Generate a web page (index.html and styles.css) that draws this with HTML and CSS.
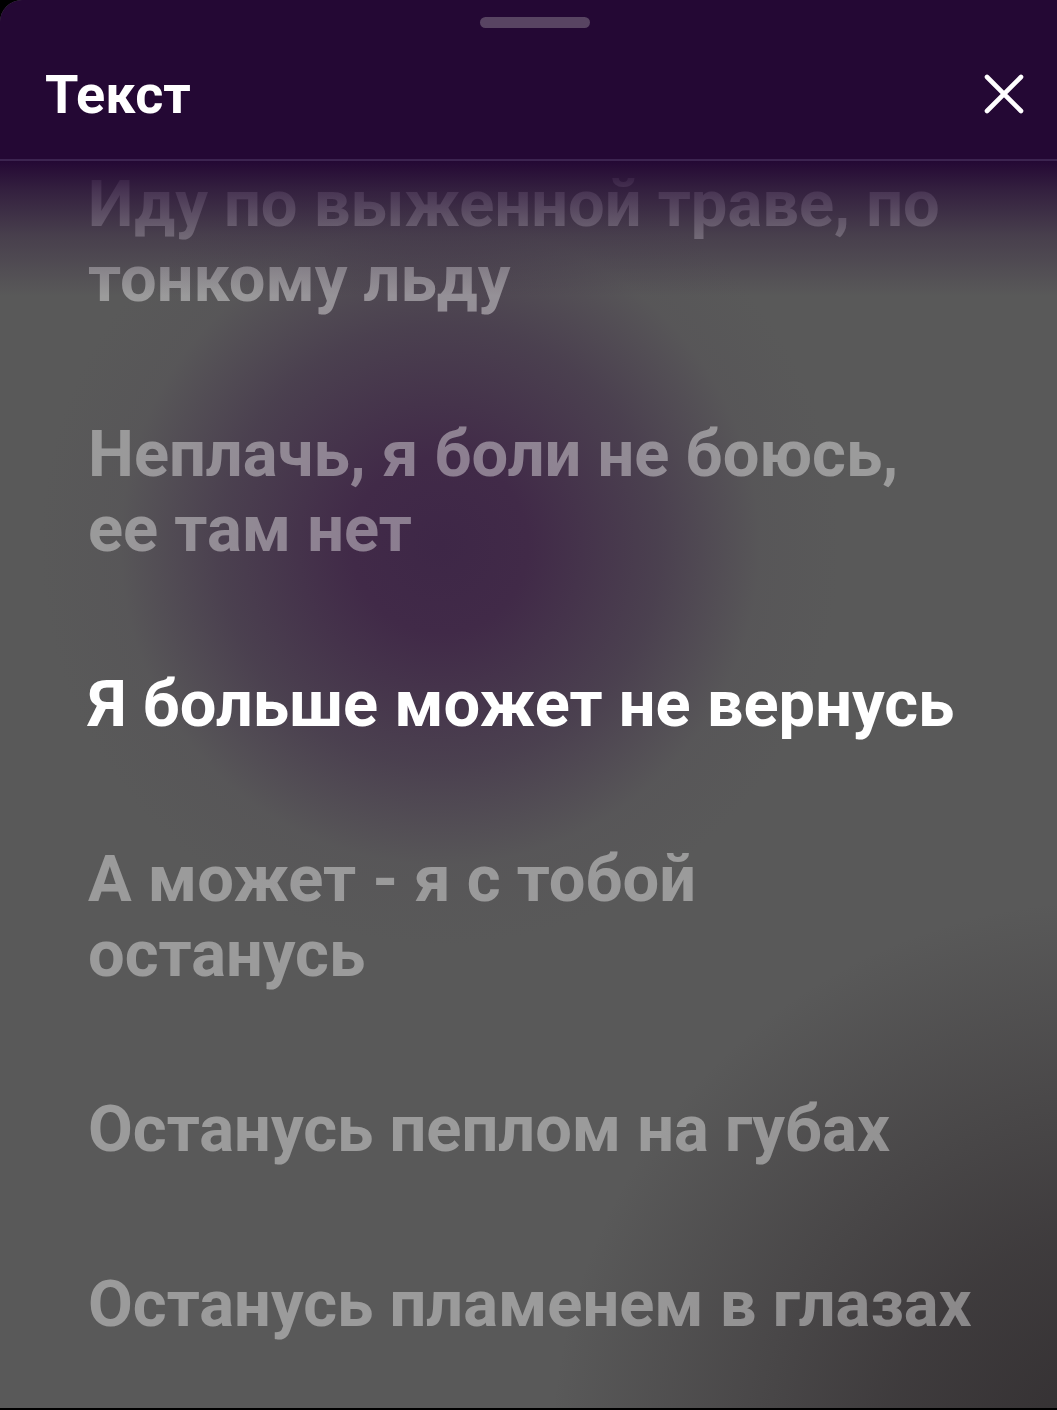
FILE: index.html
```html
<!DOCTYPE html>
<html lang="ru">
<head>
<meta charset="utf-8">
<title>Текст</title>
<link rel="stylesheet" href="styles.css">
</head>
<body>
<div class="sheet">
  <header class="head">
    <div class="handle"></div>
    <div class="bar">
      <h1 class="title">Текст</h1>
      <button class="close" aria-label="Закрыть">
        <svg viewBox="0 0 40 40" width="40" height="40"><path d="M3 3 L37 37 M37 3 L3 37" stroke="#fff" stroke-width="4.6" stroke-linecap="round" fill="none"/></svg>
      </button>
    </div>
  </header>
  <main class="lyrics">
    <div class="fade"></div>
    <p class="stanza">Иду по выженной траве, по<br>тонкому льду</p>
    <p class="stanza">Неплачь, я боли не боюсь,<br>ее там нет</p>
    <p class="stanza current">Я больше может не вернусь</p>
    <p class="stanza">А может - я с тобой<br>останусь</p>
    <p class="stanza">Останусь пеплом на губах</p>
    <p class="stanza">Останусь пламенем в глазах</p>
  </main>
</div>
</body>
</html>
```
FILE: styles.css
```css
html, body {
  margin: 0;
  padding: 0;
  background: #000;
}
.sheet {
  width: 1057px;
  height: 1408px;
  overflow: hidden;
  position: relative;
  border-top-left-radius: 22px;
  display: flex;
  flex-direction: column;
  font-family: Roboto, "Noto Sans", "Liberation Sans", sans-serif;
  background:
    radial-gradient(circle 560px at 1110px 1460px, rgba(50,46,48,1) 0%, rgba(56,52,54,0.8) 40%, rgba(88,88,88,0) 100%),
    radial-gradient(circle 400px at 440px 545px, #3e2747 0%, #412a48 22%, rgba(70,56,76,0.75) 55%, rgba(84,80,86,0.3) 80%, rgba(88,88,88,0) 100%),
    #595959;
}
.head {
  background: #240834;
  height: 159px;
  border-bottom: 2px solid #3c2450;
  display: flex;
  flex-direction: column;
  flex: none;
}
.handle {
  width: 110px;
  height: 11px;
  border-radius: 6px;
  background: #584462;
  margin: 17px 0 0 480px;
}
.bar {
  display: flex;
  align-items: center;
  justify-content: space-between;
  padding: 0 33px 0 45px;
  height: 110px;
  margin-top: 11px;
}
.title {
  margin: 0;
  color: #fff;
  font-size: 54px;
  font-weight: 700;
}
.close {
  background: none;
  border: 0;
  padding: 0;
  width: 40px;
  height: 40px;
  display: flex;
}
.lyrics {
  position: relative;
  padding: 6px 40px 0 88px;
}
.fade {
  position: absolute;
  left: 0;
  right: 0;
  top: 0;
  height: 135px;
  background: linear-gradient(to bottom, rgba(36,8,52,1) 0%, rgba(36,8,52,0.72) 20%, rgba(46,24,58,0.4) 55%, rgba(70,60,76,0) 100%);
  pointer-events: none;
  z-index: 2;
}
.stanza {
  margin: 0 0 100px;
  font-size: 65px;
  line-height: 75px;
  font-weight: 700;
  color: rgba(255,255,255,0.4);
}
.current {
  color: #fff;
}
```
